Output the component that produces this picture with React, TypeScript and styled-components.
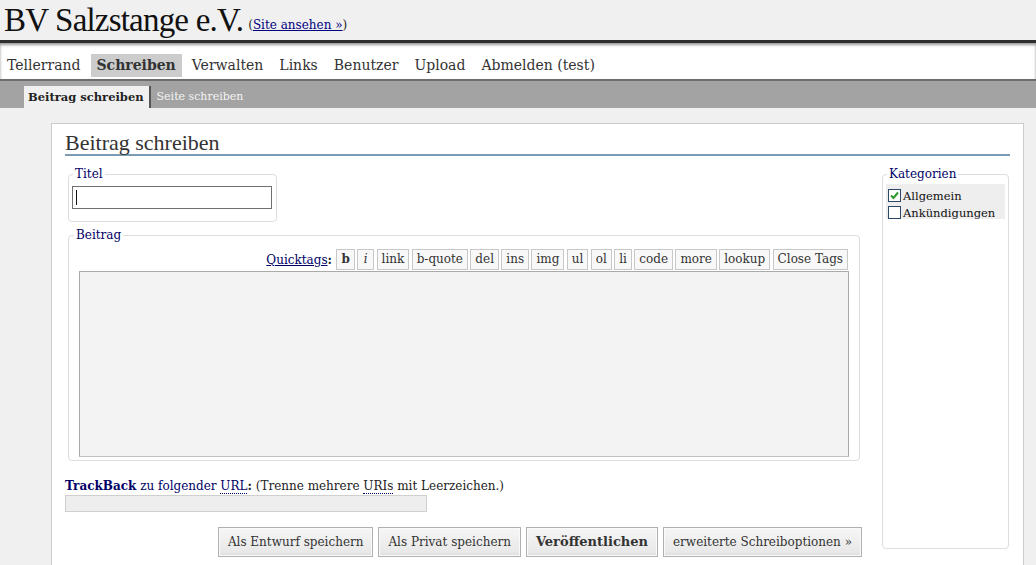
import styled, { createGlobalStyle } from "styled-components"

const GlobalStyle = createGlobalStyle`
    html, body {
        margin: 0;
        padding: 0;
        background: #f0f0f0;
        font-family: "DejaVu Serif", "Liberation Serif", serif;
        font-size: 12px;
        color: #222;
    }
`

const navItems = ["Tellerrand", "Schreiben", "Verwalten", "Links", "Benutzer", "Upload", "Abmelden (test)"]
const quicktags = ["b", "i", "link", "b-quote", "del", "ins", "img", "ul", "ol", "li", "code", "more", "lookup", "Close Tags"]

const Check = () => (
    <svg width="11" height="11" viewBox="0 0 11 11">
        <path d="M2 5.5 L4.5 8 L9 2.5" fill="none" stroke="#2a9a2a" strokeWidth="2" />
    </svg>
)

export default function App() {
    return (
        <>
            <GlobalStyle />
            <Header>
                <SiteName>BV Salzstange e.V.</SiteName>
                <SiteLink>(<a href="#">Site ansehen »</a>)</SiteLink>
            </Header>
            <Nav>
                {navItems.map(item => (
                    <NavItem key={item} active={item === "Schreiben"}>{item}</NavItem>
                ))}
            </Nav>
            <SubNav>
                <SubTab active>Beitrag schreiben</SubTab>
                <SubTab>Seite schreiben</SubTab>
            </SubNav>
            <Main>
                <Panel>
                    <Heading>Beitrag schreiben</Heading>
                    <Columns>
                        <Left>
                            <TitleSet>
                                <Legend>Titel</Legend>
                                <TitleInput>
                                    <Caret />
                                </TitleInput>
                            </TitleSet>
                            <PostSet>
                                <Legend>Beitrag</Legend>
                                <Toolbar>
                                    <QuickLabel><a href="#">Quicktags</a><b>:</b></QuickLabel>
                                    {quicktags.map(tag => (
                                        <TagButton key={tag} bold={tag === "b"} italic={tag === "i"}>{tag}</TagButton>
                                    ))}
                                </Toolbar>
                                <Editor />
                            </PostSet>
                            <TrackLine>
                                <TrackLink><b>TrackBack</b> zu folgender <Abbr>URL</Abbr></TrackLink><b>:</b> (Trenne mehrere <Abbr>URIs</Abbr> mit Leerzeichen.)
                            </TrackLine>
                            <TrackInput />
                            <Actions>
                                <SubmitButton>Als Entwurf speichern</SubmitButton>
                                <SubmitButton>Als Privat speichern</SubmitButton>
                                <SubmitButton primary>Veröffentlichen</SubmitButton>
                                <SubmitButton>erweiterte Schreiboptionen »</SubmitButton>
                            </Actions>
                        </Left>
                        <CatSet>
                            <Legend>Kategorien</Legend>
                            <CatList>
                                <CatRow><Box><Check /></Box>Allgemein</CatRow>
                                <CatRow><Box />Ankündigungen</CatRow>
                            </CatList>
                        </CatSet>
                    </Columns>
                </Panel>
            </Main>
        </>
    )
}

const Header = styled.div`
    height: 43px;
    background: #f0f0f0;
    border-bottom: 3px solid #2e2e2e;
    display: flex;
    align-items: flex-end;
    padding: 0 0 2px 4px;
    box-sizing: border-box;
`
const SiteName = styled.h1`
    margin: 0;
    font-family: "Liberation Serif", serif;
    font-weight: 400;
    font-size: 33px;
    letter-spacing: -0.8px;
    line-height: 36px;
    color: #111;
`
const SiteLink = styled.span`
    font-size: 12px;
    margin: 0 0 6px 5px;
    color: #222;
    a {
        color: #000080;
        text-decoration: underline;
    }
`
const Nav = styled.div`
    height: 38px;
    background: #fff;
    box-shadow: inset 0 2px 3px rgba(0, 0, 0, 0.4);
    border-bottom: 2px solid #6d6d6d;
    display: flex;
    align-items: center;
    padding: 9px 0 0 1px;
    box-sizing: border-box;
    gap: 4px;
`
const NavItem = styled.span<{ active?: boolean }>`
    font-size: 14px;
    line-height: 23px;
    padding: 0 6px;
    color: #333;
    font-weight: ${p => p.active ? 700 : 400};
    background: ${p => p.active ? "#cccccc" : "transparent"};
`
const SubNav = styled.div`
    height: 27px;
    background: #a3a3a3;
    display: flex;
    align-items: flex-end;
    padding-left: 24px;
`
const SubTab = styled.span<{ active?: boolean }>`
    height: 22px;
    line-height: 22px;
    padding: ${p => p.active ? "0 5px 0 4px" : "0 6px"};
    font-size: ${p => p.active ? "11.5px" : "11px"};
    font-weight: ${p => p.active ? 700 : 400};
    color: ${p => p.active ? "#222" : "#f4f4f4"};
    background: ${p => p.active ? "#f0f0f0" : "transparent"};
    border-right: ${p => p.active ? "2px solid #555" : "none"};
`
const Main = styled.div`
    padding: 15px 12px 0 51px;
`
const Panel = styled.div`
    background: #fff;
    border: 1px solid #ccc;
    padding: 8px 13px 20px 13px;
`
const Heading = styled.h2`
    margin: 0;
    font-family: "Liberation Serif", serif;
    font-weight: 400;
    font-size: 22px;
    line-height: 22px;
    color: #333;
    border-bottom: 2px solid #7b9ab4;
`
const Columns = styled.div`
    display: flex;
    align-items: flex-start;
    gap: 20px;
    margin-top: 11px;
`
const Left = styled.div`
    width: 797px;
    display: flex;
    flex-direction: column;
`
const Fieldset = styled.fieldset`
    margin: 0;
    border: 1px solid #ddd;
    border-radius: 4px;
    padding: 0 4px 10px;
`
const Legend = styled.legend`
    color: #000066;
    font-size: 12px;
    padding: 0 2px;
    margin-left: 1px;
`
const TitleSet = styled(Fieldset)`
    width: 209px;
    margin-left: 3px;
    box-sizing: border-box;
    padding: 0 3px 12px;
`
const TitleInput = styled.div`
    width: 200px;
    height: 23px;
    box-sizing: border-box;
    border: 1px solid #707070;
    padding: 3px 3px;
    margin-top: 5px;
    background: #fff;
`
const Caret = styled.span`
    display: block;
    width: 1px;
    height: 15px;
    background: #111;
`
const PostSet = styled(Fieldset)`
    width: 792px;
    margin: 6px 0 0 3px;
    box-sizing: border-box;
    padding: 0 4px 3px 4px;
`
const Toolbar = styled.div`
    display: flex;
    justify-content: flex-end;
    align-items: center;
    gap: 2.4px;
    margin: 7px 7px 1px 0;
`
const QuickLabel = styled.span`
    font-size: 12px;
    margin-right: 2px;
    a {
        color: #000066;
        text-decoration: underline;
    }
`
const TagButton = styled.span<{ bold?: boolean; italic?: boolean }>`
    height: 21px;
    line-height: 19px;
    box-sizing: border-box;
    border: 1px solid #c8c8c8;
    background: #f8f8f8;
    padding: 0 4px;
    min-width: 17px;
    text-align: center;
    font-size: 12px;
    color: #333;
    font-weight: ${p => p.bold ? 700 : 400};
    font-style: ${p => p.italic ? "italic" : "normal"};
`
const Editor = styled.textarea`
    display: block;
    width: 770px;
    height: 186px;
    margin-left: 6px;
    box-sizing: border-box;
    border: 1px solid #aaa;
    border-bottom-color: #c0c0c0;
    background: #f3f3f3;
    resize: none;
    outline: none;
`
const TrackLine = styled.div`
    margin-top: 18px;
    font-size: 12px;
    line-height: 15px;
    color: #222;
`
const TrackLink = styled.span`
    color: #000066;
    b {
        font-weight: 700;
    }
`
const Abbr = styled.span`
    border-bottom: 1px dotted #000066;
`
const TrackInput = styled.div`
    width: 362px;
    height: 17px;
    box-sizing: border-box;
    margin-top: 1px;
    border: 1px solid #cfcfcf;
    background: #eeeeee;
`
const Actions = styled.div`
    display: flex;
    justify-content: flex-end;
    gap: 5px;
    margin-top: 15px;
`
const SubmitButton = styled.span<{ primary?: boolean }>`
    height: 30px;
    line-height: 28px;
    box-sizing: border-box;
    padding: 0 9px;
    font-size: ${p => p.primary ? "13px" : "12px"};
    font-weight: ${p => p.primary ? 700 : 400};
    color: #333;
    border: 1px solid #b0b0b0;
    box-shadow: inset 0 0 0 1px #fafafa, inset 0 -2px 0 1px #e2e2e2;
    background: linear-gradient(#f6f6f6, #e6e6e6);
`
const CatSet = styled(Fieldset)`
    width: 127px;
    height: 382px;
    box-sizing: border-box;
    padding: 0 3px;
`
const CatList = styled.div`
    background: #eeeeee;
    padding: 3px 0 0 2px;
    margin-top: 3px;
    height: 35px;
    box-sizing: border-box;
`
const CatRow = styled.div`
    display: flex;
    align-items: center;
    height: 17px;
    font-size: 11.5px;
    color: #111;
    gap: 2px;
`
const Box = styled.span`
    width: 13px;
    height: 13px;
    box-sizing: border-box;
    border: 1px solid #2b4866;
    background: #fff;
    display: flex;
    align-items: center;
    justify-content: center;
`
